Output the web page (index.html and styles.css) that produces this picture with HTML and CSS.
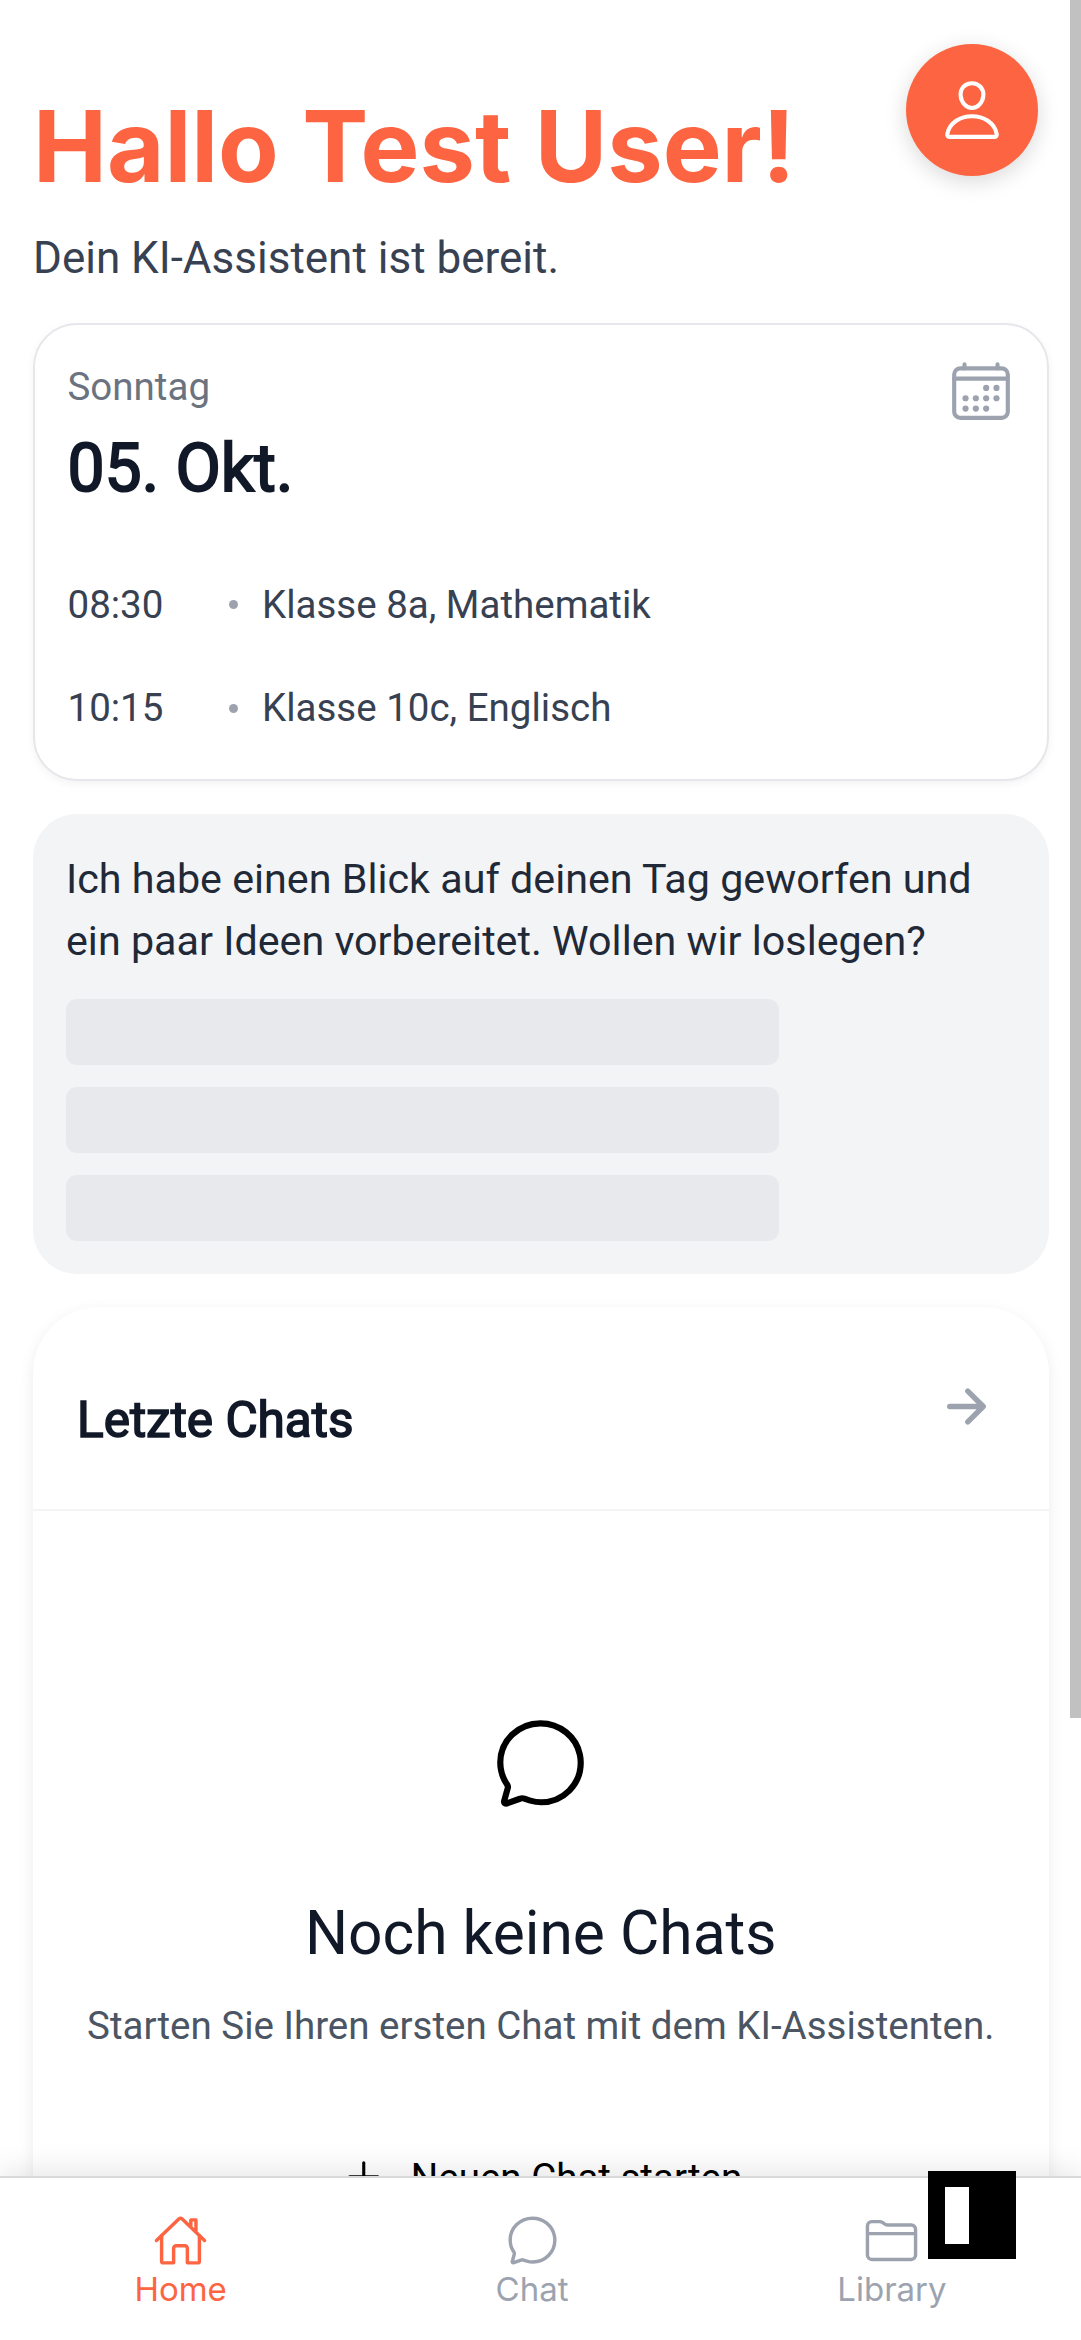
FILE: index.html
```html
<!DOCTYPE html>
<html lang="de">
<head>
<meta charset="utf-8">
<title>Home</title>
<link rel="stylesheet" href="styles.css">
</head>
<body>
<div class="app">
  <main class="page">
    <header class="hero">
      <div class="greeting">
        <h1>Hallo Test User!</h1>
        <p>Dein KI-Assistent ist bereit.</p>
      </div>
      <button class="avatar" aria-label="Profil">
        <svg class="icon" viewBox="0 0 512 512"><path d="M344 144c-3.92 52.87-44 96-88 96s-84.15-43.12-88-96c-4-55 35-96 88-96s92 42 88 96z"/><path d="M256 304c-87 0-175.3 48-191.64 138.6C62.39 453.52 68.57 464 80 464h352c11.44 0 17.62-10.48 15.65-21.4C431.3 352 343 304 256 304z"/></svg>
      </button>
    </header>

    <section class="calendar">
      <div class="calendar-head">
        <div>
          <div class="weekday">Sonntag</div>
          <div class="date">05. Okt.</div>
        </div>
        <svg class="icon calendar-icon" viewBox="0 0 512 512"><rect x="48" y="80" width="416" height="384" rx="48"/><path d="M128 48v32M384 48v32M464 160H48"/><g class="dots"><circle cx="296" cy="232" r="24"/><circle cx="376" cy="232" r="24"/><circle cx="296" cy="312" r="24"/><circle cx="376" cy="312" r="24"/><circle cx="136" cy="312" r="24"/><circle cx="216" cy="312" r="24"/><circle cx="136" cy="392" r="24"/><circle cx="216" cy="392" r="24"/><circle cx="296" cy="392" r="24"/></g></svg>
      </div>
      <ul class="events">
        <li><span class="time">08:30</span><span class="bullet"></span><span>Klasse 8a, Mathematik</span></li>
        <li><span class="time">10:15</span><span class="bullet"></span><span>Klasse 10c, Englisch</span></li>
      </ul>
    </section>

    <section class="assistant">
      <p>Ich habe einen Blick auf deinen Tag geworfen und ein paar Ideen vorbereitet. Wollen wir loslegen?</p>
      <div class="skeletons"><div></div><div></div><div></div></div>
    </section>

    <section class="chats">
      <div class="chats-head">
        <h2>Letzte Chats</h2>
        <svg class="icon arrow" viewBox="0 0 512 512"><path d="M268 112l144 144-144 144M392 256H100"/></svg>
      </div>
      <div class="empty">
        <svg class="icon empty-icon" viewBox="0 0 512 512"><path d="M87.49 380c1.19-4.38-1.44-10.47-3.95-14.86a44.86 44.86 0 00-2.54-3.8 199.81 199.81 0 01-33-110C47.65 139.09 140.73 48 255.83 48 356.21 48 440 117.54 459.58 209.85a199 199 0 014.42 41.64c0 112.41-89.49 204.93-204.59 204.93-18.3 0-43-4.6-56.47-8.37s-26.92-8.77-30.39-10.11a31.09 31.09 0 00-11.12-2.07 30.71 30.71 0 00-12.09 2.43l-67.83 24.48a16 16 0 01-4.67 1.22 9.6 9.6 0 01-9.57-9.74 15.85 15.85 0 01.6-3.29z"/></svg>
        <h3>Noch keine Chats</h3>
        <p>Starten Sie Ihren ersten Chat mit dem KI-Assistenten.</p>
        <button class="new-chat">
          <svg class="icon add" viewBox="0 0 512 512"><path d="M256 112v288M400 256H112"/></svg>
          <span>Neuen Chat starten</span>
        </button>
      </div>
    </section>
  </main>

  <nav class="tabs">
    <a class="tab active">
      <svg class="icon" viewBox="0 0 512 512"><path d="M80 212v236a16 16 0 0016 16h96V328a24 24 0 0124-24h80a24 24 0 0124 24v136h96a16 16 0 0016-16V212"/><path d="M480 256L266.89 52c-5-5.28-16.69-5.34-21.78 0L32 256M400 179V64h-48v69"/></svg>
      <span>Home</span>
    </a>
    <a class="tab">
      <svg class="icon" viewBox="0 0 512 512"><path d="M87.49 380c1.19-4.38-1.44-10.47-3.95-14.86a44.86 44.86 0 00-2.54-3.8 199.81 199.81 0 01-33-110C47.65 139.09 140.73 48 255.83 48 356.21 48 440 117.54 459.58 209.85a199 199 0 014.42 41.64c0 112.41-89.49 204.93-204.59 204.93-18.3 0-43-4.6-56.47-8.37s-26.92-8.77-30.39-10.11a31.09 31.09 0 00-11.12-2.07 30.71 30.71 0 00-12.09 2.43l-67.83 24.48a16 16 0 01-4.67 1.22 9.6 9.6 0 01-9.57-9.74 15.85 15.85 0 01.6-3.29z"/></svg>
      <span>Chat</span>
    </a>
    <a class="tab">
      <svg class="icon" viewBox="0 0 512 512"><path d="M440 432H72a40 40 0 01-40-40V120a40 40 0 0140-40h75.89a40 40 0 0122.19 6.72l27.84 18.56a40 40 0 0022.19 6.72H440a40 40 0 0140 40v240a40 40 0 01-40 40zM32 192h448"/></svg>
      <span>Library</span>
    </a>
  </nav>

  <div class="scroll-thumb"></div>
  <div class="widget"><div class="widget-bar"></div></div>
</div>
</body>
</html>
```
FILE: styles.css
```css
* { box-sizing: border-box; margin: 0; padding: 0; }

body {
  background: #fff;
  color: #374151;
  font-family: Roboto, "Liberation Sans", sans-serif;
  font-size: 38.5px;
  line-height: 58px;
}

button { border: 0; background: none; font: inherit; color: inherit; }
ul { list-style: none; }

.icon {
  display: block;
  flex: none;
  fill: none;
  stroke: currentColor;
  stroke-width: 32;
  stroke-linecap: round;
  stroke-linejoin: round;
}

.app {
  position: relative;
  display: flex;
  flex-direction: column;
  height: 2340px;
  overflow: hidden;
}

.page {
  flex: 1;
  min-height: 0;
  overflow: hidden;
  padding: 0 32.5px 0 33px;
}

/* Greeting */
.hero {
  display: flex;
  justify-content: space-between;
  align-items: flex-start;
  height: 323px;
  padding: 44px 11px 0 0;
}
.greeting { padding-top: 42.5px; }
.greeting h1 {
  font: 700 99px/119px Inter, sans-serif;
  color: #fd6542;
  margin-bottom: 19.5px;
}
.greeting p { font-size: 44px; line-height: 66px; }

.avatar {
  display: grid;
  place-items: center;
  width: 132px;
  height: 132px;
  border-radius: 50%;
  background: #fd6542;
  color: #fff;
  box-shadow: 0 5.5px 22px rgba(0, 0, 0, .15);
}
.avatar .icon { width: 66px; height: 66px; }

/* Calendar card */
.calendar {
  height: 458px;
  padding: 33px 33px 33px 32.5px;
  border: 2px solid #e5e7eb;
  border-radius: 44px;
  background: #fff;
  box-shadow: 0 3px 8px rgba(0, 0, 0, .05);
}
.calendar-head { display: flex; justify-content: space-between; align-items: flex-start; }
.weekday { color: #6b7280; }
.date {
  margin-top: 13px;
  font-size: 66px;
  line-height: 79px;
  color: #111827;
  -webkit-text-stroke: 2px #111827;
}
.calendar-icon { width: 66px; height: 66px; margin-top: -0.4px; color: #9ca3af; }
.dots { fill: currentColor; stroke: none; }

.events { display: grid; gap: 45.5px; margin-top: 67.5px; }
.events li { display: flex; align-items: center; }
.time { width: 161.5px; }
.bullet {
  width: 9px;
  height: 9px;
  margin-right: 24px;
  border-radius: 50%;
  background: #9ca3af;
}

/* Assistant card */
.assistant {
  margin-top: 33px;
  height: 460px;
  padding: 35px 33px 33px;
  border-radius: 44px;
  background: #f3f4f6;
  color: #1f2937;
}
.assistant p { font-size: 41.25px; line-height: 61.9px; }
.skeletons { display: grid; gap: 22px; width: 713px; margin-top: 26px; }
.skeletons div { height: 66px; border-radius: 11px; background: #e7e9ec; }

/* Recent chats */
.chats {
  margin-top: 33px;
  height: 1100px;
  border-radius: 66px;
  background: #fff;
  box-shadow: 0 5.5px 16px rgba(0, 0, 0, .08);
}
.chats-head {
  display: flex;
  justify-content: space-between;
  align-items: flex-start;
  height: 204px;
  padding: 71.5px 55px 0 44px;
  border-bottom: 2px solid #f3f4f6;
}
.chats-head h2 {
  margin-top: 11.5px;
  font-size: 49.5px;
  line-height: 60px;
  font-weight: 400;
  color: #111827;
  -webkit-text-stroke: 1.6px #111827;
}
.arrow { width: 55px; height: 55px; color: #9ca3af; stroke-width: 50; }

.empty {
  display: flex;
  flex-direction: column;
  align-items: center;
  padding-top: 203px;
}
.empty-icon { width: 99px; height: 99px; color: #000; }
.empty h3 {
  margin-top: 81px;
  font-size: 60.5px;
  line-height: 80px;
  font-weight: 400;
  color: #111827;
}
.empty p { margin-top: 23px; color: #4b5563; }
.new-chat {
  display: flex;
  align-items: center;
  gap: 22px;
  margin-top: 94px;
  color: #000;
  font-size: 38.5px;
}
.add { width: 49.5px; height: 49.5px; margin-bottom: 2px; }

/* Bottom tabs */
.tabs {
  position: relative;
  display: flex;
  justify-content: space-around;
  height: 164px;
  padding-top: 34.5px;
  border-top: 2px solid #d9dadb;
  background: #fff;
  box-shadow: 0 -5px 28px rgba(0, 0, 0, .1);
}
.tab {
  display: flex;
  flex-direction: column;
  align-items: center;
  color: #9ca3af;
  font: 400 33px/40px Inter, sans-serif;
}
.tab .icon { width: 55px; height: 55px; margin-bottom: 1px; }
.tab.active { color: #fd6542; }

/* Overlays */
.scroll-thumb {
  position: absolute;
  top: 0;
  right: 0;
  width: 11px;
  height: 1718px;
  background: #c1c1c1;
}
.widget {
  position: absolute;
  right: 65px;
  bottom: 81.5px;
  width: 88px;
  height: 88px;
  padding: 16px 17px;
  background: #000;
}
.widget-bar { width: 24px; height: 57px; background: #fff; }
```
